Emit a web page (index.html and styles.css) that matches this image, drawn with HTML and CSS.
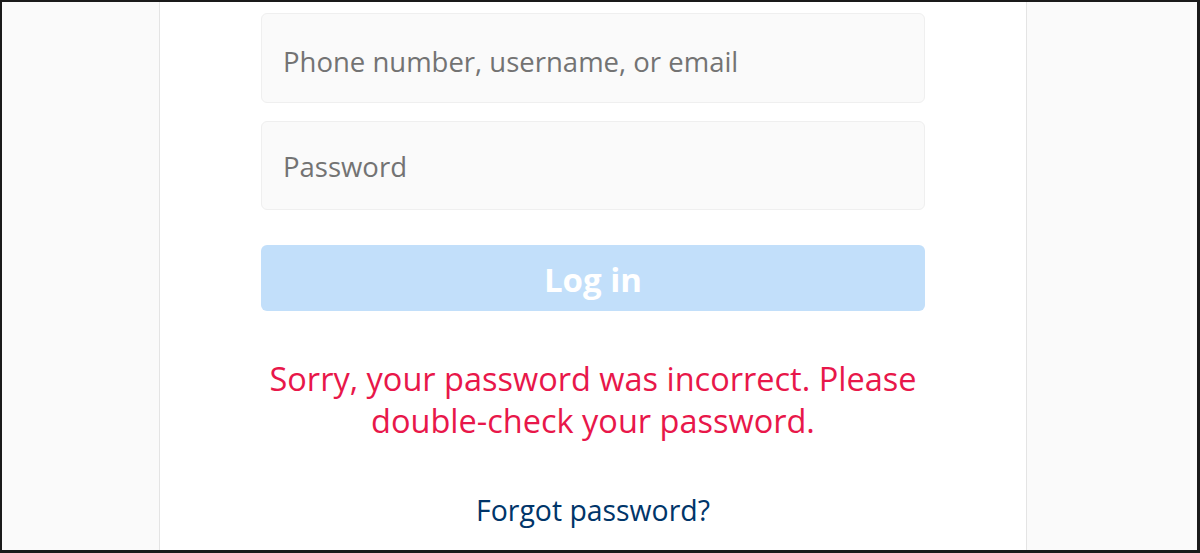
FILE: index.html
```html
<!DOCTYPE html>
<html lang="en">
<head>
<meta charset="utf-8">
<title>Log in</title>
<link rel="stylesheet" href="styles.css">
</head>
<body>
<div class="frame">
  <main class="card">
    <form class="login-form">
      <input class="field" type="text" placeholder="Phone number, username, or email">
      <input class="field field-second" type="password" placeholder="Password">
      <button class="login-btn" type="button">Log in</button>
    </form>
    <p class="error">Sorry, your password was incorrect. Please<br>double-check your password.</p>
    <a class="forgot" href="#">Forgot password?</a>
  </main>
</div>
</body>
</html>
```

FILE: styles.css
```css
html, body {
  margin: 0;
  padding: 0;
}
body {
  width: 1200px;
  height: 553px;
  overflow: hidden;
  font-family: "Open Sans", "Noto Sans", sans-serif;
}
.frame {
  box-sizing: border-box;
  width: 1200px;
  height: 553px;
  border-top: 2px solid #1a1a1a;
  border-left: 2px solid #1a1a1a;
  border-right: 3px solid #1a1a1a;
  border-bottom: 3px solid #1a1a1a;
  background: #fafafa;
  display: flex;
  padding-left: 157px;
}
.card {
  box-sizing: border-box;
  width: 868px;
  height: 100%;
  background: #fff;
  border-left: 1px solid #e4e4e4;
  border-right: 1px solid #e4e4e4;
  padding: 11px 101px 0;
  display: flex;
  flex-direction: column;
  align-items: center;
}
.login-form {
  width: 100%;
  display: flex;
  flex-direction: column;
}
.field {
  box-sizing: border-box;
  width: 100%;
  height: 90px;
  border: 1px solid #efefef;
  border-radius: 6px;
  background: #fafafa;
  padding: 6px 21px 0;
  font-family: inherit;
  font-size: 27.5px;
  color: #262626;
  outline: none;
}
.field::placeholder {
  color: #737373;
}
.field-second {
  margin-top: 18px;
  height: 89px;
  padding-top: 2px;
}
.login-btn {
  margin-top: 35px;
  height: 66px;
  border: none;
  border-radius: 6px;
  background: #c2dffa;
  color: #fff;
  font-family: inherit;
  font-weight: 700;
  font-size: 33px;
  padding-top: 3px;
}
.error {
  margin: 47px 0 0;
  text-align: center;
  color: #e8174a;
  font-size: 32.5px;
  line-height: 42px;
}
.forgot {
  margin-top: 51px;
  color: #003569;
  text-decoration: none;
  font-size: 28.4px;
  line-height: 34px;
}
```
